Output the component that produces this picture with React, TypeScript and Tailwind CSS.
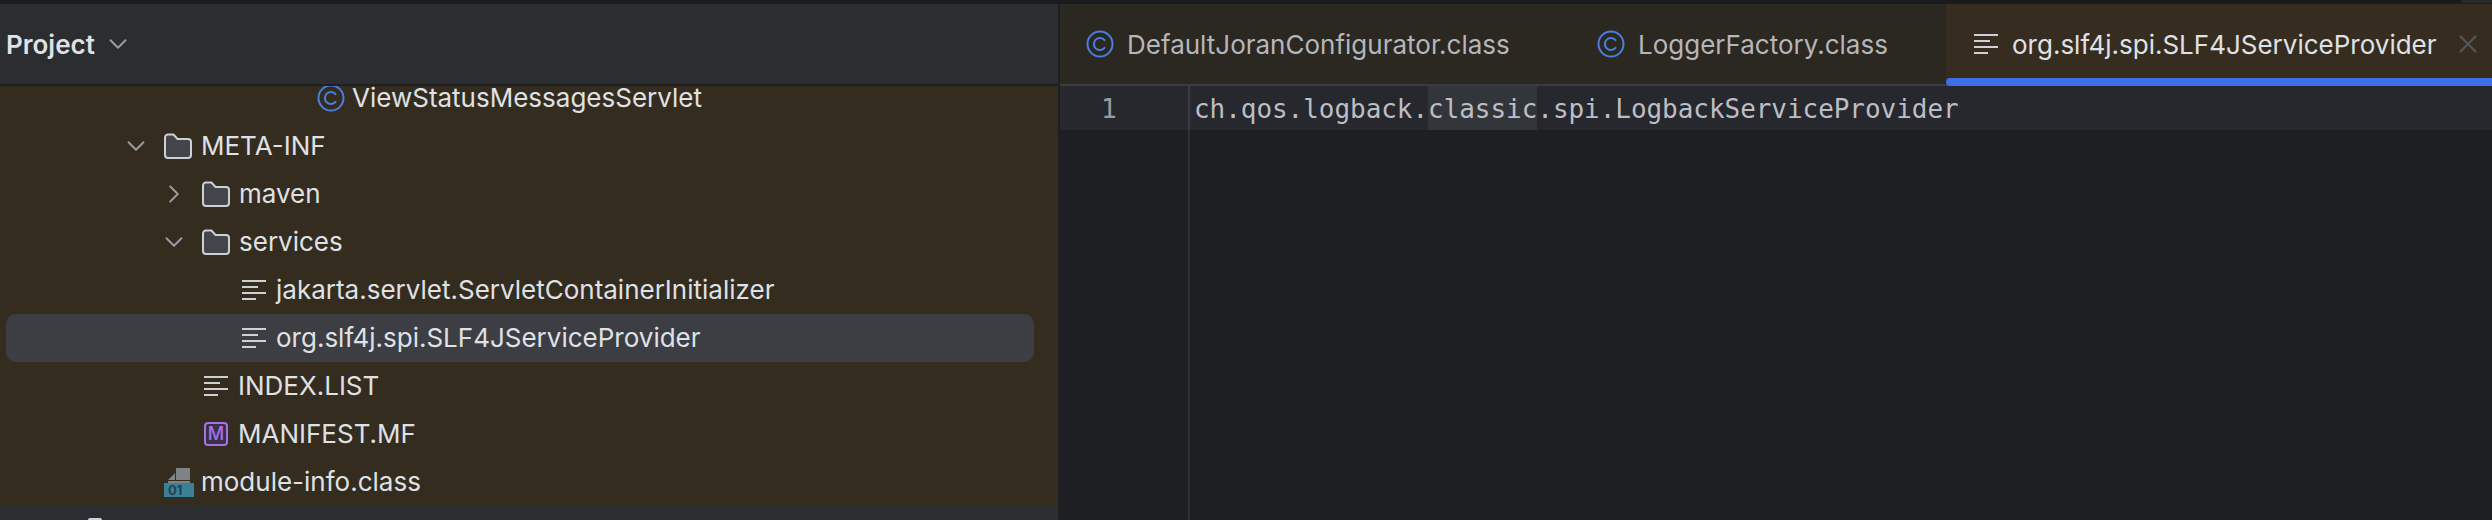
import { ChevronDown, ChevronRight, X } from "lucide-react";
import type { ReactNode } from "react";

function ClassIcon({ className }: { className?: string }) {
  return (
    <svg viewBox="0 0 28 28" className={className} fill="none">
      <circle cx="14" cy="14" r="12.5" stroke="#4a7fe0" strokeWidth="2" />
      <path d="M18.5 10.2a6 6 0 1 0 0 7.6" stroke="#4a7fe0" strokeWidth="2" strokeLinecap="round" />
    </svg>
  );
}

function TextFileIcon({ className }: { className?: string }) {
  return (
    <svg viewBox="0 0 24 22" className={className} fill="none" stroke="#ced0d6" strokeWidth="2">
      <path d="M0 2h24M0 8h16M0 14h24M0 20h14" />
    </svg>
  );
}

function FolderIcon() {
  return (
    <svg viewBox="0 0 28 26" className="w-7 h-[26px] shrink-0 mr-0.5" fill="#43454a" stroke="#ced0d6" strokeWidth="2">
      <path d="M1 4.5A3 3 0 0 1 4 1.5h5.5l4 4.5H24a3 3 0 0 1 3 3v13a3 3 0 0 1-3 3H4a3 3 0 0 1-3-3z" />
    </svg>
  );
}

function ManifestIcon() {
  return (
    <div className="w-6 h-6 shrink-0 rounded-[4px] border-2 border-[#a571e6] bg-[#3a2f45] flex items-center justify-center font-['Inter',sans-serif] text-[18px] font-medium leading-none text-[#a571e6]">
      M
    </div>
  );
}

function ModuleIcon() {
  return (
    <svg viewBox="0 0 30 30" className="w-[30px] h-[30px] shrink-0">
      <path d="M4 13 11 6v7zM12 1h14v12H12zM4 14h22v2H4z" fill="#7e8388" />
      <rect x="0" y="16" width="30" height="14" fill="#3a8198" />
      <text x="4" y="28" fontSize="13" fontWeight="700" fontFamily="Inter, sans-serif" fill="#24414f">
        01
      </text>
    </svg>
  );
}

function TreeRow({ indent, chevron, icon, label, selected, clipped }: {
  indent: string;
  chevron?: "down" | "right";
  icon: ReactNode;
  label: string;
  selected?: boolean;
  clipped?: boolean;
}) {
  return (
    <div className={`relative flex items-center text-[26px] leading-none text-[#dfe1e5] ${clipped ? "h-9 pb-3" : "h-12"} ${indent} ${selected ? "bg-[#3c3e44] rounded-[10px] ml-1.5 mr-6" : ""}`}>
      {chevron === "down" && <ChevronDown className="absolute -ml-[43px] w-[30px] h-[30px] text-[#9a9ca1]" strokeWidth={1.5} />}
      {chevron === "right" && <ChevronRight className="absolute -ml-[43px] w-[30px] h-[30px] text-[#9a9ca1]" strokeWidth={1.5} />}
      {icon}
      <span className="ml-[7px] whitespace-nowrap">{label}</span>
    </div>
  );
}

function Tab({ icon, label, width, active }: { icon: ReactNode; label: string; width: string; active?: boolean }) {
  return (
    <div className={`relative h-full flex items-center shrink-0 text-[26px] ${width} ${active ? "bg-[#362d20] text-[#dfe1e5]" : "text-[#b4b6bb]"}`}>
      {icon}
      <span className="whitespace-nowrap">{label}</span>
      {active && <X className="ml-4 w-[30px] h-[30px] text-[#56575a]" strokeWidth={1.5} />}
      {active && <div className="absolute left-0 right-0 -bottom-0.5 h-2 rounded-l-md bg-[#3b6fe8]" />}
    </div>
  );
}

export default function App() {
  return (
    <div className="w-[2492px] h-[520px] overflow-hidden flex flex-col bg-[#1e1f22] font-['Inter',sans-serif]">
      <div className="h-1 bg-[#1a1b1e] shrink-0 flex justify-end">
        <div className="w-[30px] h-[3px] bg-[#27292d]" />
      </div>
      <div className="flex-1 flex min-h-0">
        {/* Project tool window */}
        <div className="w-[1058px] shrink-0 flex flex-col bg-[#2b2d30]">
          <div className="h-[82px] shrink-0 flex items-center pl-1.5 border-b-2 border-[#1e1f22]">
            <span className="text-[26px] font-semibold text-[#dfe1e5]">Project</span>
            <ChevronDown className="ml-2 w-[30px] h-[30px] text-[#9a9ca1]" strokeWidth={1.5} />
          </div>
          <div className="flex-1 min-h-0 overflow-hidden bg-[#352c20]">
            <TreeRow clipped indent="pl-[317px]" icon={<ClassIcon className="w-7 h-7 shrink-0" />} label="ViewStatusMessagesServlet" />
            <TreeRow indent="pl-[164px]" chevron="down" icon={<FolderIcon />} label="META-INF" />
            <TreeRow indent="pl-[202px]" chevron="right" icon={<FolderIcon />} label="maven" />
            <TreeRow indent="pl-[202px]" chevron="down" icon={<FolderIcon />} label="services" />
            <TreeRow indent="pl-[242px]" icon={<TextFileIcon className="w-6 h-[22px] shrink-0 mr-[3px]" />} label="jakarta.servlet.ServletContainerInitializer" />
            <TreeRow selected indent="pl-[236px]" icon={<TextFileIcon className="w-6 h-[22px] shrink-0 mr-[3px]" />} label="org.slf4j.spi.SLF4JServiceProvider" />
            <TreeRow indent="pl-[204px]" icon={<TextFileIcon className="w-6 h-[22px] shrink-0 mr-[3px]" />} label="INDEX.LIST" />
            <TreeRow indent="pl-[204px]" icon={<div className="mr-[3px]"><ManifestIcon /></div>} label="MANIFEST.MF" />
            <TreeRow indent="pl-[164px]" icon={<ModuleIcon />} label="module-info.class" />
          </div>
          <div className="h-[14px] shrink-0 bg-[#2b2d30] flex items-end pl-[88px]">
            <div className="w-[14px] h-0.5 rounded-t-full bg-[#ced0d6]" />
          </div>
        </div>
        <div className="w-0.5 shrink-0 bg-[#1e1f22]" />
        {/* Editor */}
        <div className="flex-1 min-w-0 flex flex-col">
          <div className="h-[82px] shrink-0 flex bg-[#2b2721] border-b-2 border-[#393b40]">
            <Tab width="w-[510px] pl-[26px]" icon={<ClassIcon className="w-7 h-7 shrink-0 mr-[13px]" />} label="DefaultJoranConfigurator.class" />
            <Tab width="w-[376px] pl-[27px]" icon={<ClassIcon className="w-7 h-7 shrink-0 mr-[13px]" />} label="LoggerFactory.class" />
            <Tab active width="flex-1 pl-[28px]" icon={<TextFileIcon className="w-6 h-[22px] shrink-0 mr-[14px]" />} label="org.slf4j.spi.SLF4JServiceProvider" />
          </div>
          <div className="flex-1 relative font-['DejaVu_Sans_Mono',monospace] text-[26px] tracking-[-0.05px]">
            <div className="h-11 flex bg-[#26282e] leading-[46px]">
              <div className="w-[130px] shrink-0 border-r-2 border-[#393b40] pl-[41px] text-[#9a9ca1]">1</div>
              <div className="pl-[4px] text-[#bcbec4]">
                ch.qos.logback.<span className="inline-block h-11 bg-[#32363a]">classic</span>.spi.LogbackServiceProvider
              </div>
            </div>
            <div className="h-full w-[130px] border-r-2 border-[#2f3134]" />
          </div>
        </div>
      </div>
    </div>
  );
}
